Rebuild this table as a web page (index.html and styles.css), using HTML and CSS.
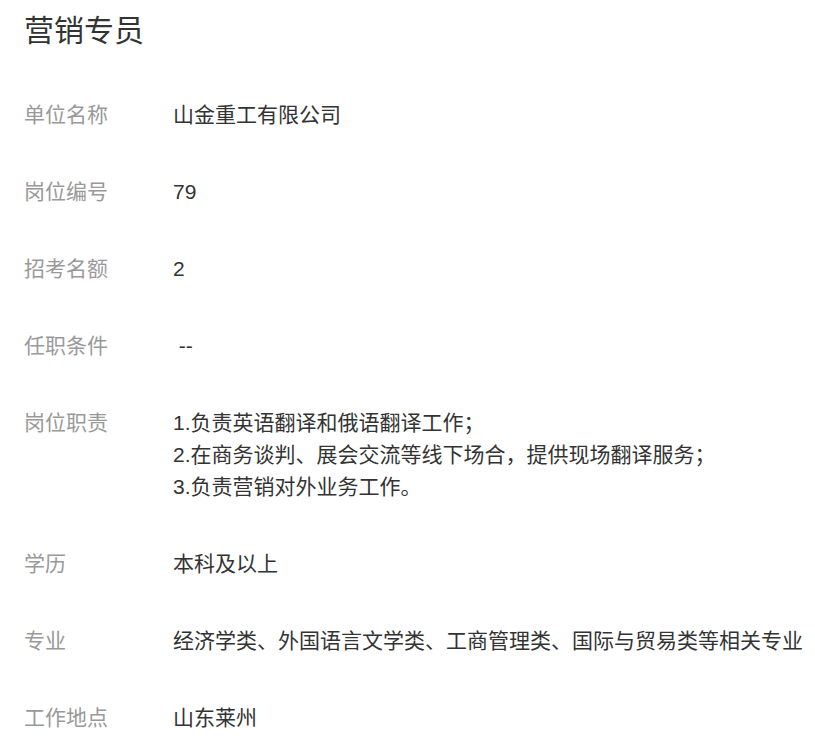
FILE: index.html
```html
<!DOCTYPE html>
<html lang="zh-CN">
<head>
  <meta charset="UTF-8">
  <meta name="viewport" content="width=device-width, initial-scale=1.0">
  <title>营销专员</title>
  <link rel="stylesheet" href="styles.css">
</head>
<body>
  <div class="job-detail">
    <h1 class="job-title">营销专员</h1>
    <dl class="info-list">
      <div class="info-row">
        <dt class="info-label">单位名称</dt>
        <dd class="info-value">山金重工有限公司</dd>
      </div>
      <div class="info-row">
        <dt class="info-label">岗位编号</dt>
        <dd class="info-value">79</dd>
      </div>
      <div class="info-row">
        <dt class="info-label">招考名额</dt>
        <dd class="info-value">2</dd>
      </div>
      <div class="info-row">
        <dt class="info-label">任职条件</dt>
        <dd class="info-value">&nbsp;--</dd>
      </div>
      <div class="info-row">
        <dt class="info-label">岗位职责</dt>
        <dd class="info-value">
          <p>1.负责英语翻译和俄语翻译工作；</p>
          <p>2.在商务谈判、展会交流等线下场合，提供现场翻译服务；</p>
          <p>3.负责营销对外业务工作。</p>
        </dd>
      </div>
      <div class="info-row">
        <dt class="info-label">学历</dt>
        <dd class="info-value">本科及以上</dd>
      </div>
      <div class="info-row">
        <dt class="info-label">专业</dt>
        <dd class="info-value">经济学类、外国语言文学类、工商管理类、国际与贸易类等相关专业</dd>
      </div>
      <div class="info-row">
        <dt class="info-label">工作地点</dt>
        <dd class="info-value">山东莱州</dd>
      </div>
    </dl>
  </div>
</body>
</html>
```

FILE: styles.css
```css
* {
  margin: 0;
  padding: 0;
  box-sizing: border-box;
  font-family: "Liberation Sans", "Noto Sans CJK SC", sans-serif;
}

body {
  background-color: #ffffff;
  color: #333;
}

.job-detail {
  padding: 8px 0 0 24px;
}

.job-title {
  font-size: 30px;
  font-weight: 400;
  line-height: 45px;
  color: #333;
  margin-bottom: 46px;
}

.info-row {
  display: flex;
  font-size: 21px;
  line-height: 32px;
  padding-bottom: 45px;
}

.info-label {
  width: 149px;
  flex-shrink: 0;
  color: #999;
}

.info-value {
  color: #333;
}
```
